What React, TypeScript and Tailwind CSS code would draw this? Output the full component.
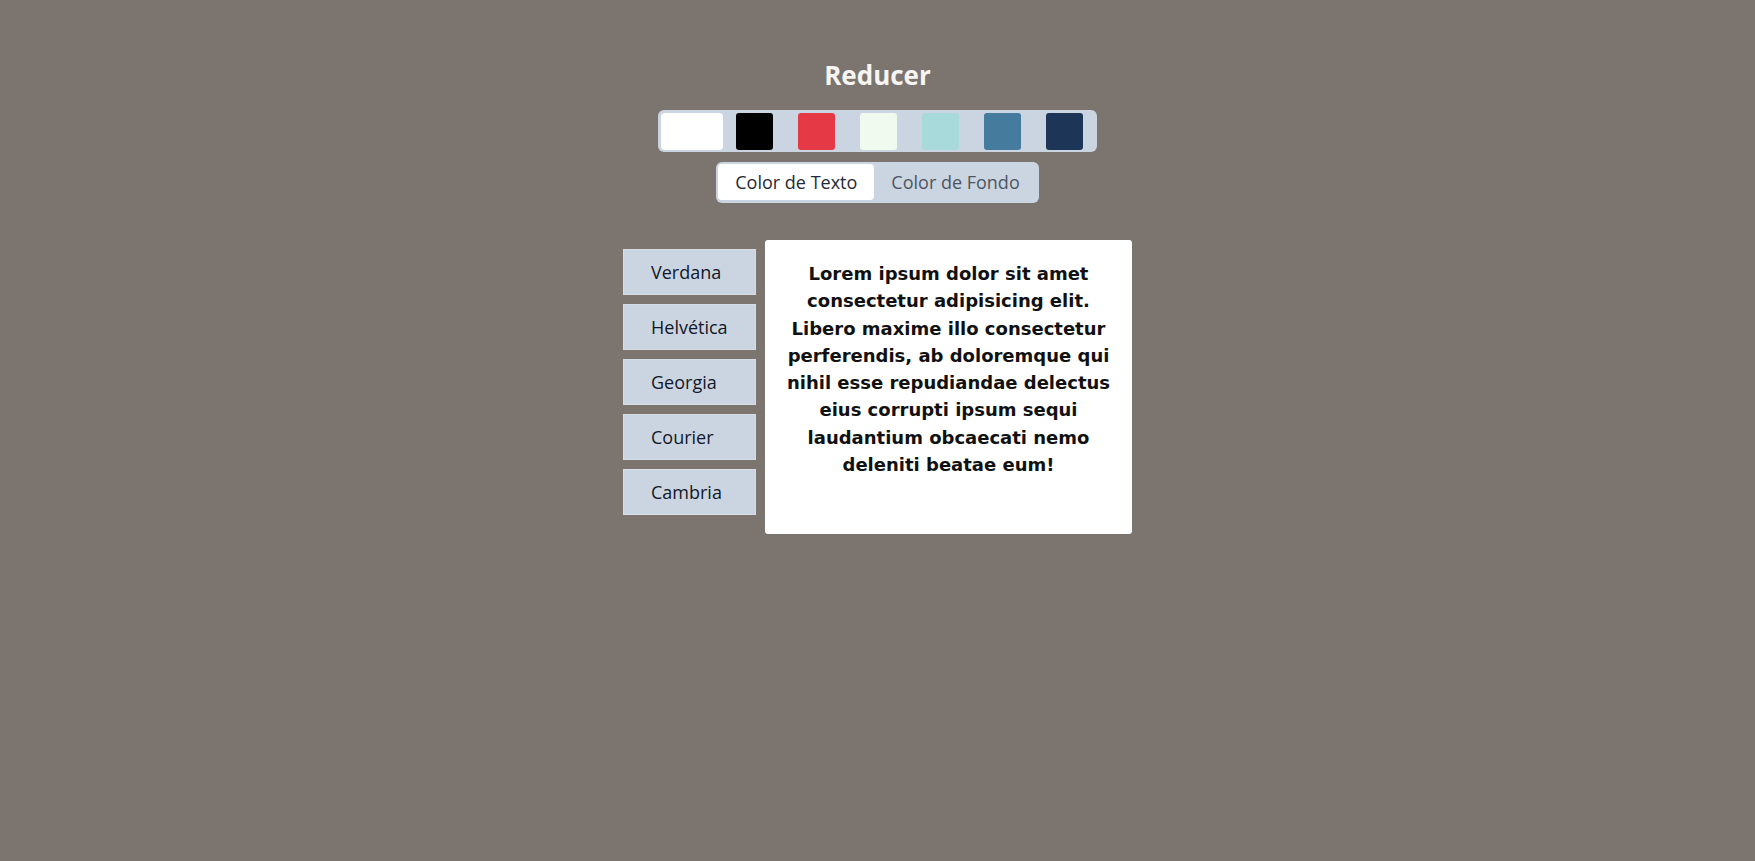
import { useState } from "react";

const colors = ["#ffffff", "#000000", "#e63946", "#f1faee", "#a8dadc", "#457b9d", "#1d3557"];
const fonts = ["Verdana", "Helvética", "Georgia", "Courier", "Cambria"];

export default function App() {
  const [selected, setSelected] = useState(0);
  const [mode, setMode] = useState<"texto" | "fondo">("texto");

  return (
    <div className="min-h-[861px] bg-[#7b746f] flex flex-col items-center pt-[59px] font-['Open_Sans',sans-serif]">
      <h1 className="text-[26px] leading-[32px] font-bold text-[#f7f5f3]">Reducer</h1>

      {/* Palette */}
      <div className="mt-[19px] flex rounded-md bg-[#cbd5e1] pl-[3px] pr-[2px] pt-[3px] pb-[2px]">
        {colors.map((c, i) => (
          <button
            key={c}
            onClick={() => setSelected(i)}
            className={
              i === selected
                ? "w-[62px] h-[37px] rounded-[4px] flex items-center justify-center bg-white"
                : "w-[62px] h-[37px] flex items-center justify-center"
            }
          >
            <span className="block w-[37px] h-[37px] rounded-[3px]" style={{ backgroundColor: c }} />
          </button>
        ))}
      </div>

      {/* Toggle */}
      <div className="mt-[10px] flex rounded-md bg-[#cbd5e1] pl-[2px] pr-[2px] pt-[2px] pb-[3px]">
        <button
          onClick={() => setMode("texto")}
          className={
            mode === "texto"
              ? "h-[36px] px-[17px] rounded-[4px] bg-white text-[18px] text-[#1f2937]"
              : "h-[36px] px-[17px] text-[18px] text-[#4b5563]"
          }
        >
          Color de Texto
        </button>
        <button
          onClick={() => setMode("fondo")}
          className={
            mode === "fondo"
              ? "h-[36px] px-[17px] rounded-[4px] bg-white text-[18px] text-[#1f2937]"
              : "h-[36px] px-[17px] text-[18px] text-[#4b5563]"
          }
        >
          Color de Fondo
        </button>
      </div>

      {/* Content */}
      <div className="mt-[37px] flex items-start gap-[9px]">
        <div className="flex flex-col gap-[9px] pt-[9px]">
          {fonts.map((f) => (
            <button
              key={f}
              className="w-[133px] h-[46px] border border-[#d6dde6] bg-[#cbd5e1] pl-[27px] text-left text-[18px] text-[#111827]"
            >
              {f}
            </button>
          ))}
        </div>
        <div className="w-[367px] h-[294px] rounded-[3px] bg-white px-[18px] pt-[20px] text-center font-['DejaVu_Sans',sans-serif] text-[18px] leading-[27.3px] font-bold text-[#111]">
          Lorem ipsum dolor sit amet consectetur adipisicing elit. Libero maxime illo consectetur perferendis, ab
          doloremque qui nihil esse repudiandae delectus eius corrupti ipsum sequi laudantium obcaecati nemo deleniti
          beatae eum!
        </div>
      </div>
    </div>
  );
}
